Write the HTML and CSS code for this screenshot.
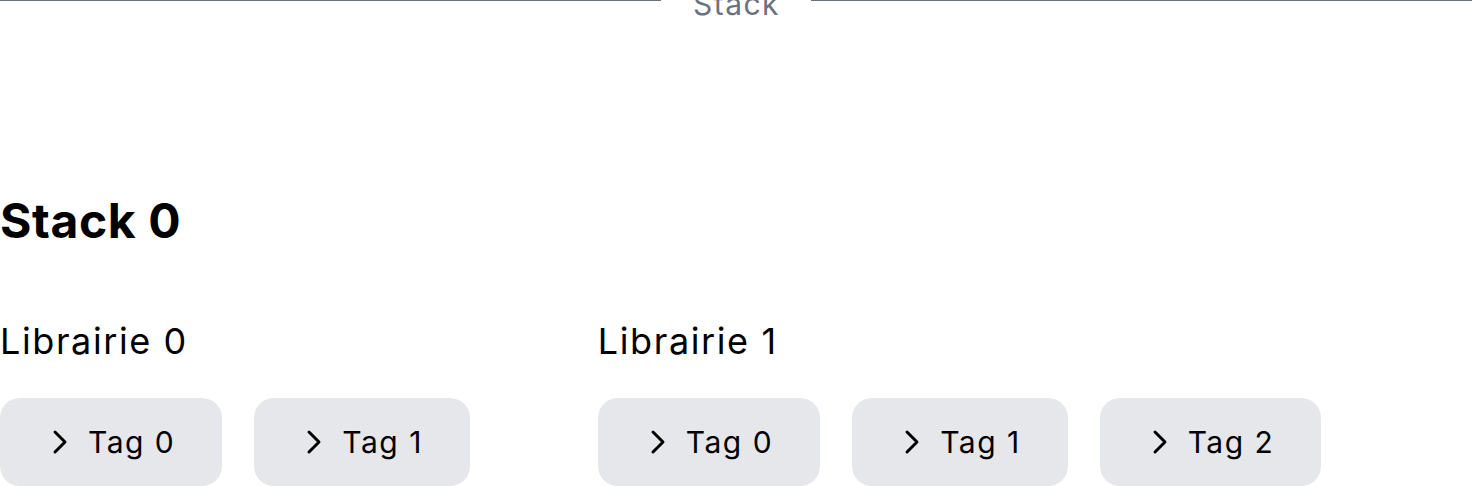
FILE: index.html
```html
<!DOCTYPE html>
<html lang="fr">
<head>
<meta charset="utf-8">
<title>Stack</title>
<link rel="stylesheet" href="styles.css">
</head>
<body>
<div class="divider">
  <span class="line"></span>
  <span class="divider-text">Stack</span>
  <span class="line"></span>
</div>
<section class="stack">
  <h2 class="stack-title">Stack 0</h2>
  <div class="libraries">
    <div class="library">
      <h3 class="library-title">Librairie 0</h3>
      <div class="tags">
        <button class="tag"><svg class="chev" viewBox="0 0 24 24"><path d="m8.25 4.5 7.5 7.5-7.5 7.5"/></svg><span>Tag 0</span></button>
        <button class="tag"><svg class="chev" viewBox="0 0 24 24"><path d="m8.25 4.5 7.5 7.5-7.5 7.5"/></svg><span>Tag 1</span></button>
      </div>
    </div>
    <div class="library">
      <h3 class="library-title">Librairie 1</h3>
      <div class="tags">
        <button class="tag"><svg class="chev" viewBox="0 0 24 24"><path d="m8.25 4.5 7.5 7.5-7.5 7.5"/></svg><span>Tag 0</span></button>
        <button class="tag"><svg class="chev" viewBox="0 0 24 24"><path d="m8.25 4.5 7.5 7.5-7.5 7.5"/></svg><span>Tag 1</span></button>
        <button class="tag"><svg class="chev" viewBox="0 0 24 24"><path d="m8.25 4.5 7.5 7.5-7.5 7.5"/></svg><span>Tag 2</span></button>
      </div>
    </div>
  </div>
</section>
</body>
</html>
```
FILE: styles.css
```css
html, body {
  margin: 0;
  padding: 0;
  background: #ffffff;
}
body {
  font-family: Inter, "Noto Sans", sans-serif;
  color: #000000;
  overflow: hidden;
}
.divider {
  display: flex;
  align-items: center;
  margin-top: -14px;
}
.line {
  flex: 1;
  height: 1px;
  background: #6b7280;
  margin-bottom: 8px;
}
.divider-text {
  font-size: 30px;
  line-height: 36px;
  letter-spacing: 1.5px;
  color: #6b7280;
  padding: 0 31px 0 32px;
}
.stack-title {
  margin: 175px 0 0 0;
  font-size: 48px;
  line-height: 48px;
  font-weight: 700;
  letter-spacing: 0.6px;
}
.libraries {
  display: flex;
  gap: 128px;
  margin-top: 76px;
}
.library-title {
  margin: 0;
  font-size: 36px;
  line-height: 40px;
  font-weight: 400;
  letter-spacing: 1.6px;
}
.tags {
  display: flex;
  gap: 32px;
  margin-top: 37px;
}
.tag {
  display: flex;
  align-items: center;
  gap: 12px;
  border: none;
  background: #e5e7eb;
  border-radius: 20px;
  padding: 26px 47px 26px 44px;
  font-family: inherit;
  font-size: 30px;
  line-height: 36px;
  letter-spacing: 1.5px;
  color: #000000;
}
.chev {
  width: 32px;
  height: 32px;
  fill: none;
  stroke: #000000;
  stroke-width: 2.2;
  stroke-linecap: round;
  stroke-linejoin: round;
}
```
